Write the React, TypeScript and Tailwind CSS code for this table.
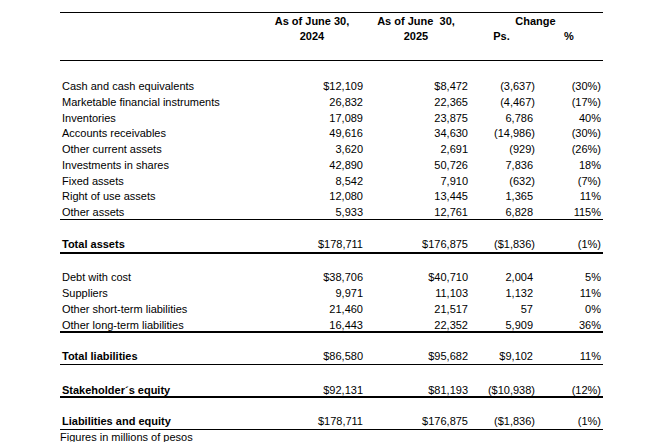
import type { ReactNode } from "react";

type Line = [string, string, string, string, string];

const assets: Line[] = [
  ["Cash and cash equivalents", "$12,109", "$8,472", "(3,637)", "(30%)"],
  ["Marketable financial instruments", "26,832", "22,365", "(4,467)", "(17%)"],
  ["Inventories", "17,089", "23,875", "6,786", "40%"],
  ["Accounts receivables", "49,616", "34,630", "(14,986)", "(30%)"],
  ["Other current assets", "3,620", "2,691", "(929)", "(26%)"],
  ["Investments in shares", "42,890", "50,726", "7,836", "18%"],
  ["Fixed assets", "8,542", "7,910", "(632)", "(7%)"],
  ["Right of use assets", "12,080", "13,445", "1,365", "11%"],
  ["Other assets", "5,933", "12,761", "6,828", "115%"],
];

const liabilities: Line[] = [
  ["Debt with cost", "$38,706", "$40,710", "2,004", "5%"],
  ["Suppliers", "9,971", "11,103", "1,132", "11%"],
  ["Other short-term liabilities", "21,460", "21,517", "57", "0%"],
  ["Other long-term liabilities", "16,443", "22,352", "5,909", "36%"],
];

const GRID = "grid grid-cols-[200px_104px_104px_67px_68px]";

function Row({ line, bold, className }: { line: Line; bold?: boolean; className: string }) {
  const [label, a, b, ps, pct] = line;
  const psPad = ps.endsWith(")") ? "" : "pr-[2px]";
  return (
    <div className={`${GRID} items-center leading-[16px] ${className}`}>
      <div className={`pl-[2px] whitespace-nowrap ${bold ? "font-bold" : ""}`}>{label}</div>
      <div className="pr-[1px] text-right">{a}</div>
      <div className="text-right">{b}</div>
      <div className={`text-right ${psPad}`}>{ps}</div>
      <div className="pr-[2px] text-right">{pct}</div>
    </div>
  );
}

function Spacer({ h }: { h: string }) {
  return <div className={h} />;
}

function Head({ children, className = "" }: { children?: ReactNode; className?: string }) {
  return <div className={`text-center whitespace-pre ${className}`}>{children}</div>;
}

export default function App() {
  return (
    <div className="h-[442px] w-[658px] overflow-hidden bg-white pl-[60px] pt-[12px] font-['Liberation_Sans',Arial,sans-serif] text-[11px] text-black">
      <div className="w-[543px]">
        <div
          className={`${GRID} h-[49px] grid-rows-[15px_15px] content-start border-y border-black pt-[1px] font-bold leading-[15px]`}
        >
          <Head />
          <Head>As of June 30,</Head>
          <Head>As of June  30,</Head>
          <Head className="col-span-2">Change</Head>
          <Head />
          <Head>2024</Head>
          <Head>2025</Head>
          <Head>Ps.</Head>
          <Head>%</Head>
        </div>

        <Spacer h="h-[17px]" />
        {assets.map((line, i) => (
          <Row
            key={line[0]}
            line={line}
            className={i === assets.length - 1 ? "h-[15.75px] border-b border-black" : "h-[15.75px]"}
          />
        ))}

        <Spacer h="h-[16px]" />
        <Row
          line={["Total assets", "$178,711", "$176,875", "($1,836)", "(1%)"]}
          bold
          className="h-[17.75px] border-b-2 border-black"
        />

        <Spacer h="h-[15.5px]" />
        {liabilities.map((line, i) => (
          <Row
            key={line[0]}
            line={line}
            className={i === liabilities.length - 1 ? "h-[16px] border-b-2 border-black" : "h-[16px]"}
          />
        ))}

        <Spacer h="h-[15px]" />
        <Row
          line={["Total liabilities", "$86,580", "$95,682", "$9,102", "11%"]}
          bold
          className="h-[17px] border-b border-black"
        />

        <Spacer h="h-[17px]" />
        <Row
          line={["Stakeholder´s equity", "$92,131", "$81,193", "($10,938)", "(12%)"]}
          bold
          className="h-[16px] border-b-2 border-black"
        />

        <Spacer h="h-[15px]" />
        <Row
          line={["Liabilities and equity", "$178,711", "$176,875", "($1,836)", "(1%)"]}
          bold
          className="h-[17px] border-b border-black"
        />

        <p className="leading-[14px]">Figures in millions of pesos</p>
      </div>
    </div>
  );
}
